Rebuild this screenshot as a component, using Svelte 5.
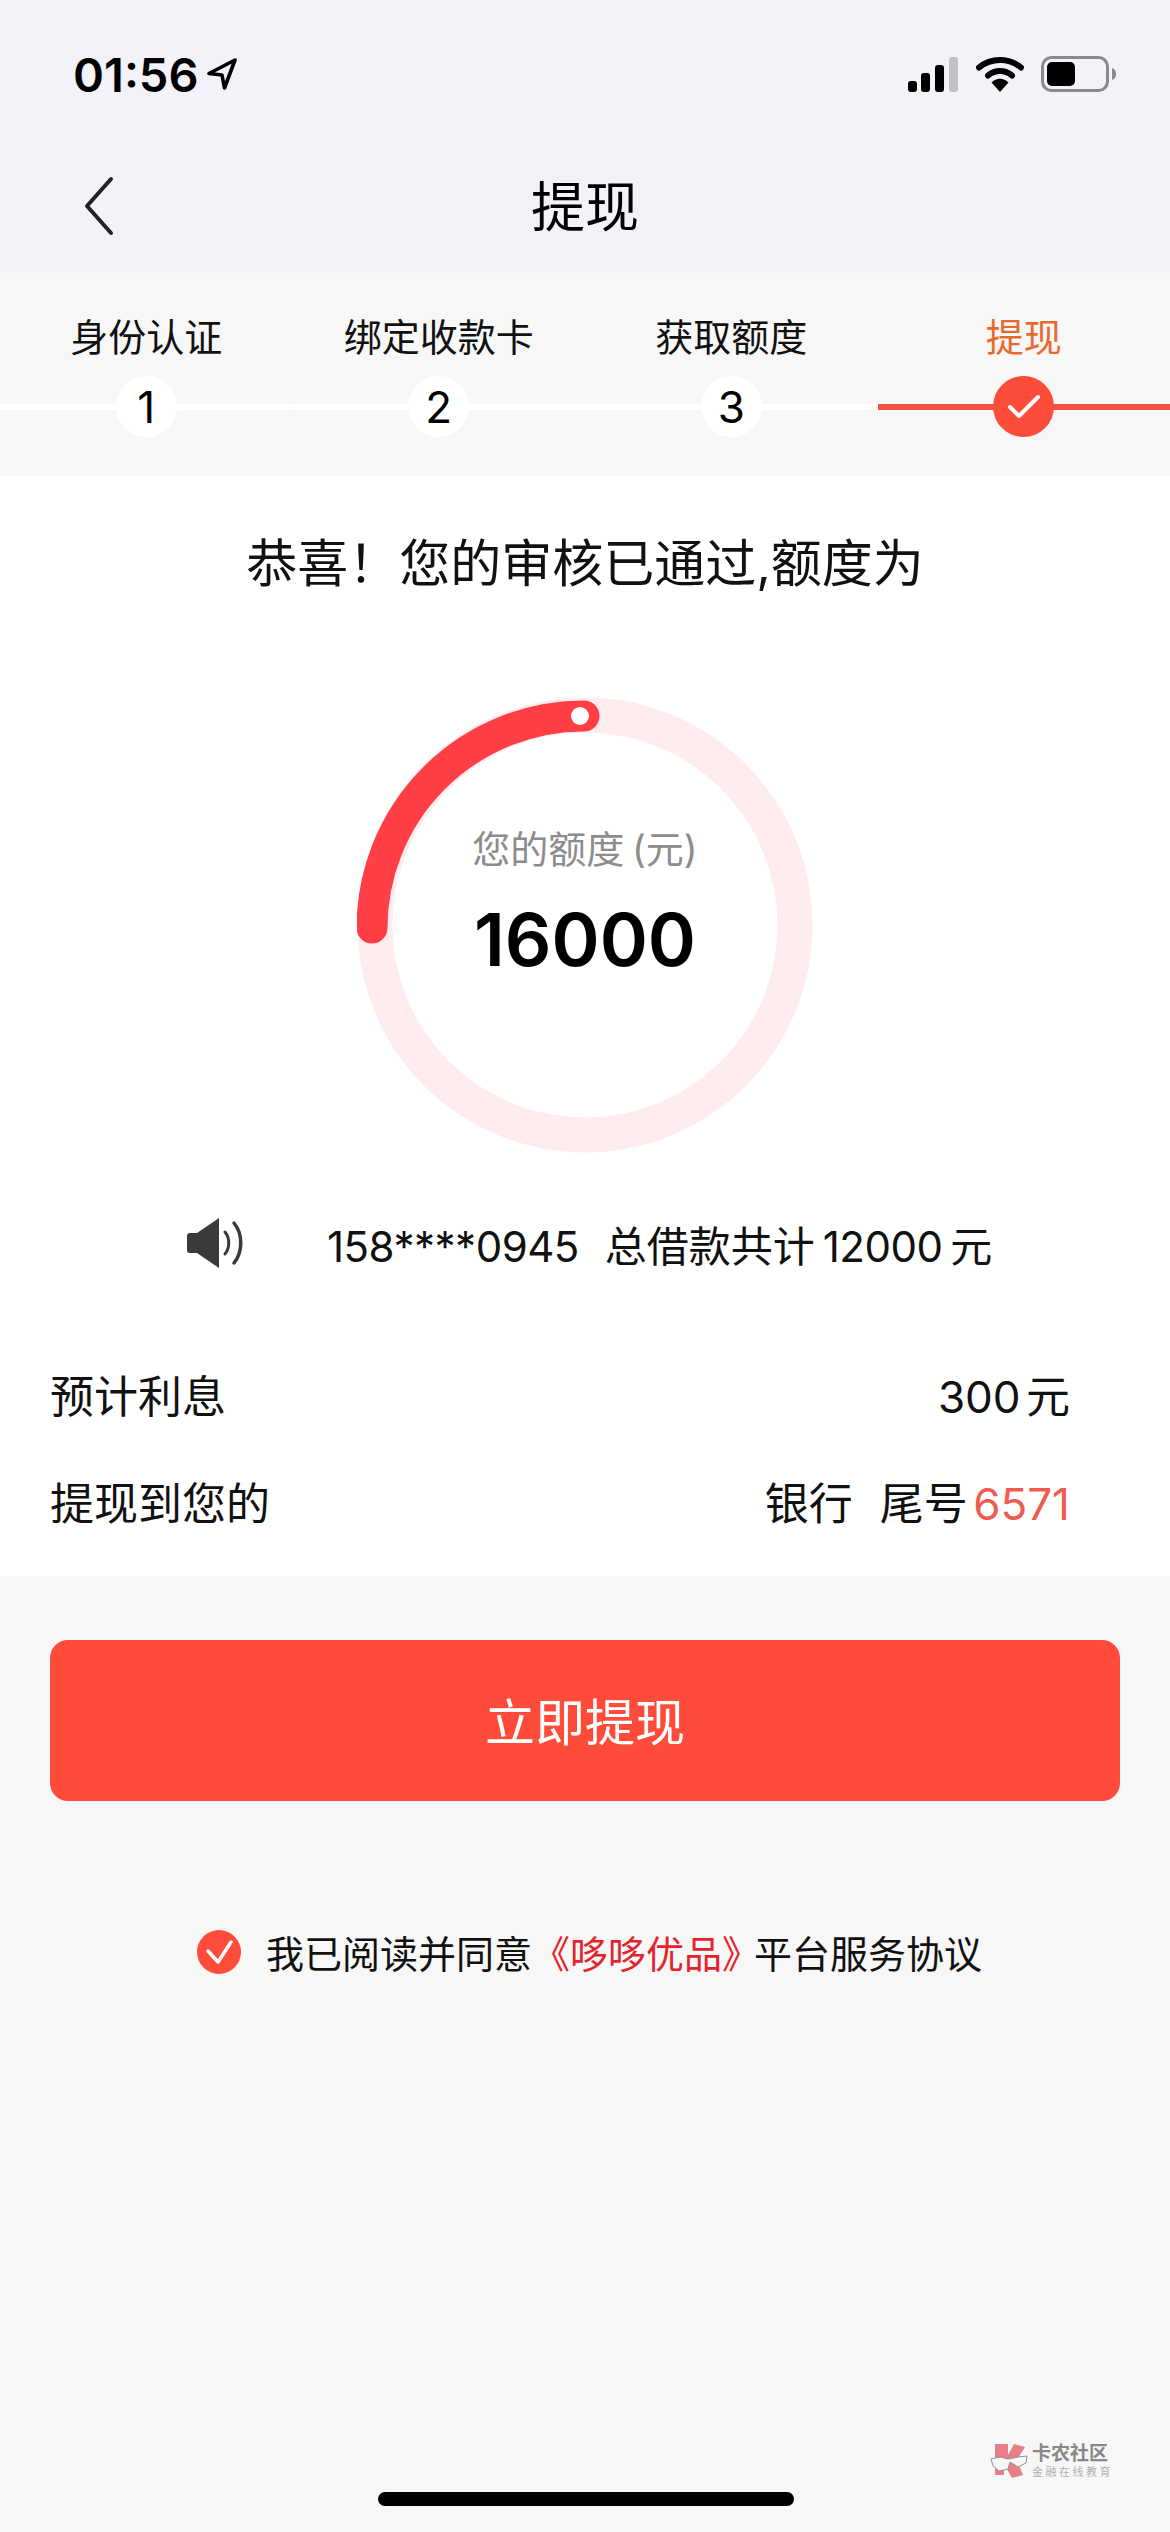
<script>
	const steps = [
		{ label: '身份认证', no: '1' },
		{ label: '绑定收款卡', no: '2' },
		{ label: '获取额度', no: '3' },
		{ label: '提现', no: '', active: true }
	];
</script>

<div class="page">
	<header class="top">
		<div class="status">
			<div class="time">
				<span>01:56</span>
				<svg width="30" height="32" viewBox="0 0 30 32"><path d="M28 2 2 15.5l13 1.5 2.5 13z" fill="none" stroke="#000" stroke-width="3.6" stroke-linejoin="round" /></svg>
			</div>
			<div class="status-icons">
				<svg width="52" height="36" viewBox="0 0 52 36">
					<rect x="1" y="25" width="9" height="11" rx="3" fill="#000" />
					<rect x="14" y="17" width="9" height="19" rx="3" fill="#000" />
					<rect x="28" y="9" width="9" height="27" rx="3" fill="#000" />
					<rect x="42" y="1" width="9" height="35" rx="3" fill="#c1c1c5" />
				</svg>
				<svg width="48" height="36" viewBox="0 0 48 36">
					<path d="M3 11.5C15 1.5 33 1.5 45 11.5" fill="none" stroke="#000" stroke-width="6" stroke-linecap="round" />
					<path d="M12 19.5C19 13.5 29 13.5 36 19.5" fill="none" stroke="#000" stroke-width="6" stroke-linecap="round" />
					<path d="M15.5 26.5C20.5 21.5 27.5 21.5 32.5 26.5L24 36z" fill="#000" />
				</svg>
				<svg width="76" height="36" viewBox="0 0 76 36">
					<rect x="1.5" y="1.5" width="65" height="33" rx="9" fill="none" stroke="#8a8a8e" stroke-width="3" />
					<rect x="6" y="6" width="28" height="24" rx="5" fill="#000" />
					<path d="M71 12c3 1 4 3 4 6s-1 5-4 6z" fill="#8a8a8e" />
				</svg>
			</div>
		</div>
		<nav class="nav">
			<svg class="back" width="30" height="60" viewBox="0 0 30 60"><path d="M27 3 3 30l24 27" fill="none" stroke="#222" stroke-width="4" stroke-linecap="round" stroke-linejoin="round" /></svg>
			<h1>提现</h1>
		</nav>
	</header>

	<section class="steps">
		{#each steps as step}
			<div class="step" class:active={step.active}>
				<div class="step-label">{step.label}</div>
				<div class="step-track">
					<div class="dot">
						{#if step.active}
							<svg width="34" height="26" viewBox="0 0 34 26"><path d="M3 13l9 9L31 3" fill="none" stroke="#fff" stroke-width="4" stroke-linecap="round" stroke-linejoin="round" /></svg>
						{:else}
							{step.no}
						{/if}
					</div>
				</div>
			</div>
		{/each}
	</section>

	<main class="card">
		<p class="congrats">恭喜！您的审核已通过,额度为</p>

		<div class="ring">
			<svg width="456" height="456" viewBox="0 0 456 456">
				<circle cx="228" cy="228" r="210" fill="none" stroke="#feecee" stroke-width="35" />
				<path d="M15 231A212 212 0 0 1 227 19" fill="none" stroke="#ff3e46" stroke-width="31" stroke-linecap="round" />
				<circle cx="223" cy="19" r="9" fill="#fff" />
			</svg>
			<div class="ring-text">
				<div class="ring-label">您的额度 (元)</div>
				<div class="ring-value">16000</div>
			</div>
		</div>

		<div class="notice">
			<svg width="60" height="52" viewBox="0 0 60 52">
				<path d="M4 16h7L33 1v50L11 36H4a3 3 0 0 1-3-3V19a3 3 0 0 1 3-3z" fill="#3a3a3a" />
				<path d="M39 15c5 6 5 16 0 22" fill="none" stroke="#3a3a3a" stroke-width="3" stroke-linecap="round" />
				<path d="M48 6c9 11 9 29 0 40" fill="none" stroke="#3a3a3a" stroke-width="3.5" stroke-linecap="round" />
			</svg>
			<span class="notice-text"><span class="num phone">158****0945</span>总借款共计 <span class="num">12000</span> 元</span>
		</div>

		<div class="rows">
			<div class="row">
				<span>预计利息</span>
				<span class="tight">300 元</span>
			</div>
			<div class="row">
				<span>提现到您的</span>
				<span class="tight"><span class="bank">银行</span>尾号 <em>6571</em></span>
			</div>
		</div>
	</main>

	<div class="action">
		<button class="submit">立即提现</button>
	</div>

	<div class="agree">
		<svg width="44" height="44" viewBox="0 0 44 44">
			<circle cx="22" cy="22" r="22" fill="#ff4c3b" />
			<path d="M11 21l10 11 13-20" fill="none" stroke="#fff" stroke-width="3.5" stroke-linecap="round" stroke-linejoin="round" />
		</svg>
		<span>我已阅读并同意<b>《哆哆优品》</b>平台服务协议</span>
	</div>

	<div class="watermark">
		<svg width="38" height="36" viewBox="0 0 38 36">
			<path d="M5 1h13v11l6-11 11 3-8 13 6 15-11 3-8-14v11H5z" fill="#e8707c" />
			<path d="M1 16l9-2 8 2 10-2 9-1-1 7-8 4-8-5-2 7-9 2-6-5z" fill="#f7f7f7" stroke="#888" stroke-width="1" />
		</svg>
		<div class="wm-text">
			<div class="wm-title">卡农社区</div>
			<div class="wm-sub">金融在线教育</div>
		</div>
	</div>

	<div class="home-bar"></div>
</div>

<style>
	:global(body) {
		margin: 0;
		background: #f7f7f7;
	}

	.page {
		position: relative;
		width: 1170px;
		height: 2532px;
		overflow: hidden;
		display: flex;
		flex-direction: column;
		background: #f7f7f7;
		color: #000;
		font-family: Inter, "Noto Sans CJK SC", sans-serif;
	}

	.top {
		height: 273px;
		background: #f2f2f8;
	}

	.status {
		height: 148px;
		box-sizing: border-box;
		padding: 0 53px 0 73px;
		display: flex;
		align-items: center;
		justify-content: space-between;
	}

	.time {
		display: flex;
		align-items: center;
		gap: 8px;
		font-size: 47px;
		font-weight: 600;
	}

	.status-icons {
		display: flex;
		align-items: center;
		gap: 17px;
	}

	.nav {
		position: relative;
		height: 116px;
		padding-bottom: 6px;
		box-sizing: border-box;
		display: flex;
		align-items: center;
		justify-content: center;
	}

	.back {
		position: absolute;
		left: 84px;
		top: 28px;
	}

	h1 {
		margin: 0;
		font-size: 54px;
		font-weight: 400;
	}

	.steps {
		height: 203px;
		box-sizing: border-box;
		padding-top: 36px;
		display: grid;
		grid-template-columns: repeat(4, 1fr);
	}

	.step-label {
		height: 56px;
		line-height: 56px;
		text-align: center;
		font-size: 38px;
		color: #111;
	}

	.step-track {
		position: relative;
		margin-top: 11px;
		height: 61px;
		display: flex;
		justify-content: center;
		background: linear-gradient(#fff, #fff) center / 100% 6px no-repeat;
	}

	.dot {
		width: 61px;
		height: 61px;
		border-radius: 50%;
		background: #fff;
		display: flex;
		align-items: center;
		justify-content: center;
		font-size: 44px;
	}

	.step.active .step-label {
		color: #e76a2c;
	}

	.step.active .step-track {
		background-image: linear-gradient(#f94f40, #f94f40);
	}

	.step.active .dot {
		background: #fe4c3b;
	}

	.card {
		height: 1100px;
		box-sizing: border-box;
		padding-top: 50px;
		background: #fff;
		display: flex;
		flex-direction: column;
	}

	.congrats {
		margin: 0;
		height: 76px;
		line-height: 76px;
		text-align: center;
		font-size: 51px;
		color: #111;
	}

	.ring {
		position: relative;
		width: 456px;
		height: 456px;
		margin: 95px auto 0;
	}

	.ring svg {
		display: block;
	}

	.ring-text {
		position: absolute;
		left: 0;
		right: 0;
		top: 122px;
		text-align: center;
	}

	.ring-label {
		height: 60px;
		line-height: 60px;
		font-size: 38px;
		word-spacing: -3px;
		color: #8c8c8c;
	}

	.ring-value {
		margin-top: 16px;
		line-height: 90px;
		font-size: 73px;
		font-weight: 600;
	}

	.notice {
		margin: 60px 0 0 186px;
		height: 60px;
		display: flex;
		align-items: center;
		gap: 81px;
	}

	.notice-text {
		font-size: 42px;
		color: #111;
		word-spacing: -4px;
		white-space: pre;
	}

	.num {
		letter-spacing: -0.5px;
	}

	.phone {
		margin-right: 26px;
	}

	.rows {
		margin-top: 67px;
	}

	.row {
		height: 107px;
		padding: 0 100px 0 50px;
		display: flex;
		align-items: center;
		justify-content: space-between;
		font-size: 44px;
		color: #111;
	}

	.tight {
		word-spacing: -7px;
	}

	.bank {
		margin-right: 27px;
	}

	.row em {
		font-style: normal;
		color: #ef5b50;
	}

	.action {
		padding: 64px 50px 0;
	}

	.submit {
		display: block;
		width: 100%;
		height: 161px;
		padding: 0 0 4px;
		border: none;
		border-radius: 18px;
		background: #fe4b3a;
		color: #fff;
		font: inherit;
		font-size: 50px;
	}

	.agree {
		margin: 123px 0 0 197px;
		display: flex;
		align-items: center;
		gap: 25px;
		font-size: 38px;
		color: #111;
	}

	.agree svg {
		flex: none;
	}

	.agree b {
		font-weight: 400;
		color: #e5232b;
		margin-right: -6px;
	}

	.watermark {
		position: absolute;
		left: 990px;
		top: 2443px;
		display: flex;
		gap: 4px;
		opacity: 0.9;
	}

	.wm-text {
		color: #7c7c7c;
	}

	.wm-title {
		font-size: 19px;
		line-height: 22px;
		font-weight: 700;
		white-space: nowrap;
	}

	.wm-sub {
		font-size: 11px;
		line-height: 15px;
		letter-spacing: 2.5px;
		color: #a9a9a9;
		white-space: nowrap;
	}

	.home-bar {
		position: absolute;
		left: 378px;
		top: 2492px;
		width: 416px;
		height: 14px;
		border-radius: 7px;
		background: #000;
	}
</style>
